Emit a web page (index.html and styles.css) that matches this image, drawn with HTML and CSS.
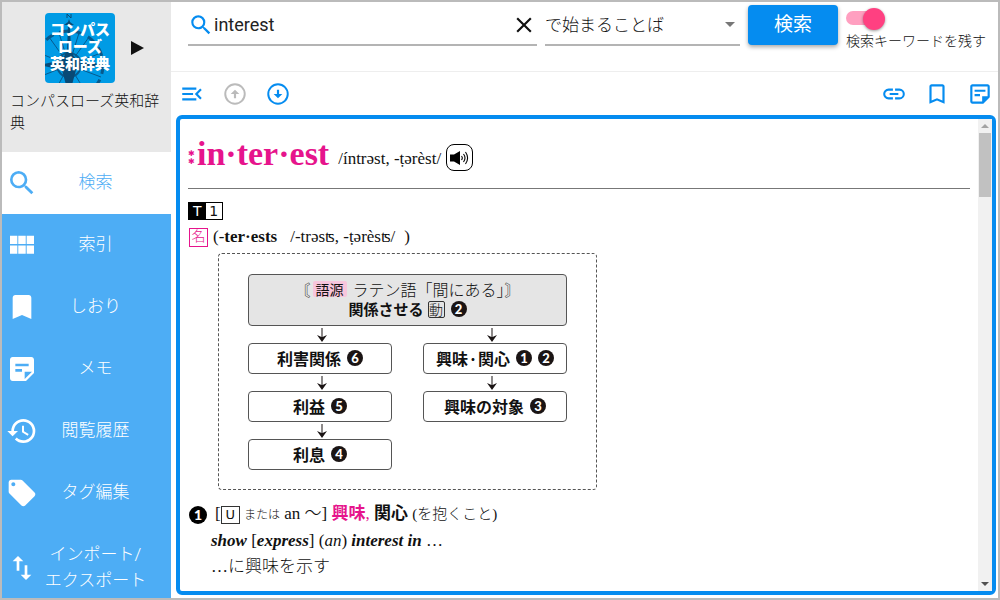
FILE: index.html
```html
<!DOCTYPE html>
<html lang="ja">
<head>
    <meta charset="UTF-8">
    <meta name="viewport" content="width=device-width, initial-scale=1.0">
    <title>コンパスローズ英和辞典</title>
    <link rel="stylesheet" href="styles.css">
</head>
<body>
    <aside class="sidebar">
        <!-- Current dictionary -->
        <div class="dictionary">
            <div class="dictionary-top">
                <div class="logo">
                    <svg class="compass" viewBox="0 0 70 70" aria-hidden="true">
                        <g fill="none" stroke="#07598c">
                            <circle cx="24" cy="52" r="34" stroke-width="3" stroke-dasharray="9 6"/>
                            <circle cx="24" cy="52" r="12" stroke-width="2"/>
                            <path d="M24 52L4 24M24 52L44 24M24 52L56 40M24 52L56 64M24 52L40 78M24 52L10 78M24 52L-6 64M24 52L-6 40M24 52L34 20M24 52L14 20"/>
                        </g>
                        <path fill="#084a76" d="M24 6l1 3 4 3h-4l1 26 5 9 30 5-30 5-7 26-7-26-22-5 22-5 5-9 1-26h-4l4-3z"/>
                        <path fill="none" stroke="#084a76" d="M22 5V1l4 4V1"/>
                    </svg>
                    <span>コンパス</span>
                    <span>ローズ</span>
                    <span>英和辞典</span>
                </div>
                <button class="next" aria-label="次の辞書">
                    <svg width="13" height="14" viewBox="0 0 13 14"><path fill="#111" d="M0 0l13 7-13 7z"/></svg>
                </button>
            </div>
            <p>コンパスローズ英和辞典</p>
        </div>

        <!-- Menu -->
        <nav>
            <a href="#" class="active">
                <svg viewBox="0 0 24 24"><path d="M15.5 14h-.79l-.28-.27A6.47 6.47 0 0 0 16 9.5 6.5 6.5 0 1 0 9.5 16c1.61 0 3.09-.59 4.23-1.57l.27.28v.79l5 4.99L20.49 19l-4.99-5zm-6 0C7.01 14 5 11.99 5 9.5S7.01 5 9.5 5 14 7.01 14 9.5 11.99 14 9.5 14z"/></svg>
                <span>検索</span>
            </a>
            <a href="#">
                <svg viewBox="0 0 24 24"><path d="M3 5h5.500v6.300H3zM9.200 5h5.600v6.300H9.200zM15.500 5H21v6.300h-5.500zM3 12.300h5.500v6.300H3zM9.200 12.300h5.600v6.300H9.200zM15.500 12.300H21v6.300h-5.500z"/></svg>
                <span>索引</span>
            </a>
            <a href="#">
                <svg viewBox="0 0 24 24"><path d="M17 3H7c-1.100 0-1.990.9-1.990 2L5 21l7-3 7 3V5c0-1.100-.9-2-2-2z"/></svg>
                <span>しおり</span>
            </a>
            <a href="#">
                <svg viewBox="0 0 24 24"><path fill-rule="evenodd" d="M19 3H5c-1.100 0-2 .9-2 2v14c0 1.100.9 2 2 2h10l6-6V5c0-1.100-.9-2-2-2zM7 8h10v2H7V8zm5 6H7v-2h5v2zm2 5.500V14h5.500L14 19.500z"/></svg>
                <span>メモ</span>
            </a>
            <a href="#">
                <svg viewBox="0 0 24 24"><path d="M13 3a9 9 0 0 0-9 9H1l3.890 3.890.07.14L9 12H6c0-3.870 3.130-7 7-7s7 3.130 7 7-3.130 7-7 7c-1.930 0-3.680-.79-4.940-2.060l-1.420 1.420A8.950 8.950 0 0 0 13 21a9 9 0 0 0 0-18zm-1 5v5l4.280 2.540.72-1.210-3.500-2.080V8H12z"/></svg>
                <span>閲覧履歴</span>
            </a>
            <a href="#">
                <svg viewBox="0 0 24 24"><path d="M21.410 11.580l-9-9C12.050 2.220 11.550 2 11 2H4c-1.100 0-2 .9-2 2v7c0 .55.220 1.050.59 1.420l9 9c.36.360.86.580 1.410.580.55 0 1.050-.220 1.410-.590l7-7c.370-.360.590-.860.590-1.410 0-.55-.230-1.060-.590-1.420zM5.500 7C4.670 7 4 6.330 4 5.500S4.670 4 5.500 4 7 4.670 7 5.500 6.330 7 5.500 7z"/></svg>
                <span>タグ編集</span>
            </a>
            <a href="#">
                <svg viewBox="0 0 24 24"><path d="M16 17.010V10h-2v7.010h-3L15 21l4-3.990h-3zM9 3L5 6.990h3V14h2V6.990h3L9 3z"/></svg>
                <span>インポート/<br>エクスポート</span>
            </a>
        </nav>
    </aside>

    <main>
        <!-- Search form -->
        <form class="search" onsubmit="return false;">
            <div class="field keyword">
                <svg class="blue" width="26" height="26" viewBox="0 0 24 24"><path d="M15.500 14h-.79l-.28-.27A6.470 6.470 0 0 0 16 9.500 6.500 6.500 0 1 0 9.500 16c1.610 0 3.090-.59 4.230-1.570l.27.280v.79l5 4.990L20.490 19l-4.990-5zm-6 0C7.010 14 5 11.990 5 9.500S7.010 5 9.500 5 14 7.010 14 9.500 11.990 14 9.500 14z"/></svg>
                <input type="text" value="interest" aria-label="検索キーワード">
                <button type="reset" aria-label="クリア">
                    <svg width="26" height="26" viewBox="0 0 24 24"><path fill="#111" d="M19 6.410L17.590 5 12 10.590 6.410 5 5 6.410 10.590 12 5 17.590 6.410 19 12 13.410 17.590 19 19 17.590 13.410 12z"/></svg>
                </button>
            </div>
            <div class="field mode">
                <select aria-label="検索方法">
                    <option>で始まることば</option>
                    <option>で終わることば</option>
                    <option>と一致することば</option>
                </select>
            </div>
            <button class="submit">検索</button>
            <label class="keep">
                <input type="checkbox" checked>
                検索キーワードを残す
            </label>
        </form>

        <!-- Toolbar -->
        <div class="toolbar">
            <button aria-label="メニューを閉じる">
                <svg viewBox="0 0 24 24"><path d="M3 18h13v-2H3v2zm0-5h10v-2H3v2zm0-7v2h13V6H3zm18 9.590L17.420 12 21 8.410 19.590 7l-5 5 5 5L21 15.590z"/></svg>
            </button>
            <button aria-label="前へ" disabled>
                <svg viewBox="0 0 24 24"><circle cx="12" cy="12" r="9" fill="none" stroke="currentColor" stroke-width="1.800"/><path d="M11 16v-4H8l4-4 4 4h-3v4z"/></svg>
            </button>
            <button aria-label="次へ">
                <svg viewBox="0 0 24 24"><circle cx="12" cy="12" r="9" fill="none" stroke="currentColor" stroke-width="1.800"/><path d="M11 8v4H8l4 4 4-4h-3V8z"/></svg>
            </button>
            <div class="spacer"></div>
            <button aria-label="リンク">
                <svg viewBox="0 0 24 24"><path d="M3.900 12c0-1.710 1.390-3.100 3.100-3.100h4V7H7a5 5 0 0 0 0 10h4v-1.900H7c-1.710 0-3.100-1.390-3.100-3.100zM8 13h8v-2H8v2zm9-6h-4v1.900h4a3.100 3.100 0 0 1 0 6.200h-4V17h4a5 5 0 0 0 0-10z"/></svg>
            </button>
            <button aria-label="しおりに追加">
                <svg viewBox="0 0 24 24"><path d="M17 3H7c-1.100 0-1.990.9-1.990 2L5 21l7-3 7 3V5c0-1.100-.9-2-2-2zm0 15l-5-2.180L7 18V5h10v13z"/></svg>
            </button>
            <button aria-label="メモを追加">
                <svg viewBox="0 0 24 24"><path fill-rule="evenodd" d="M19 3H5c-1.100 0-2 .9-2 2v14c0 1.100.9 2 2 2h10l6-6V5c0-1.100-.9-2-2-2zM5 5h14v9h-5v5H5V5zm2 3h10v2H7V8zm0 4h5v2H7v-2z"/></svg>
            </button>
        </div>

        <!-- Entry -->
        <div class="frame">
            <article>
                <header>
                    <span class="rank"><i>✱</i><i>✱</i></span>
                    <h1>in·ter·est</h1>
                    <span class="ipa">/íntrəst, -ṭərèst/</span>
                    <button class="sound" aria-label="発音">
                        <svg width="19" height="16" viewBox="0 0 19 16">
                            <path d="M0 4.500h4L10 1v14l-6-3.500H0z"/>
                            <path fill="none" stroke="#000" stroke-width="1.100" d="M11.500 6q1.600 2 0 4M13.500 4q3 4 0 8M15.500 2q4.200 6 0 12"/>
                        </svg>
                    </button>
                </header>

                <div class="level"><b>T</b><span>1</span></div>
                <div class="forms">
                    <span class="pos">名</span>
                    <span>(-<b>ter·ests</b></span>
                    <span class="forms-ipa">/-trəsʦ, -ṭərèsʦ/</span>
                    <span>)</span>
                </div>

                <!-- Sense diagram -->
                <div class="diagram">
                    <div class="box origin">
                        <div class="origin-line etymology">〘<span class="tag">語源</span> <span>ラテン語「間にある」〙</span></div>
                        <div class="origin-line strong">関係させる <span class="verb">動</span><span class="num">2</span></div>
                    </div>
                    <div class="columns">
                        <div class="column left">
                            <svg class="arrow" viewBox="0 0 10 17"><path d="M4.500 2h1v9L10 9 5 16 0 9l4.500 2z"/></svg>
                            <div class="box">利害関係 <span class="num">6</span></div>
                            <svg class="arrow" viewBox="0 0 10 17"><path d="M4.500 2h1v9L10 9 5 16 0 9l4.500 2z"/></svg>
                            <div class="box">利益 <span class="num">5</span></div>
                            <svg class="arrow" viewBox="0 0 10 17"><path d="M4.500 2h1v9L10 9 5 16 0 9l4.500 2z"/></svg>
                            <div class="box">利息 <span class="num">4</span></div>
                        </div>
                        <div class="column right">
                            <svg class="arrow" viewBox="0 0 10 17"><path d="M4.500 2h1v9L10 9 5 16 0 9l4.500 2z"/></svg>
                            <div class="box"><span class="joined">興味<span>·</span>関心</span> <span class="num">1</span><span class="num">2</span></div>
                            <svg class="arrow" viewBox="0 0 10 17"><path d="M4.500 2h1v9L10 9 5 16 0 9l4.500 2z"/></svg>
                            <div class="box">興味の対象 <span class="num">3</span></div>
                        </div>
                    </div>
                </div>

                <!-- Sense 1 -->
                <section class="sense">
                    <span class="num big">1</span>
                    <div class="sense-text">
                        <p class="meaning">[<span class="countable">U</span> <small>または</small> an ～] <span class="pink"><b>興味</b>,</span> <b>関心</b> <span class="note">(を抱くこと)</span></p>
                        <p class="phrase"><b><i>show</i></b> [<b><i>express</i></b>] (<i>an</i>) <b><i>interest in</i></b> …</p>
                        <p class="phrase">…に興味を示す</p>
                    </div>
                </section>
            </article>
            <div class="scrollbar" aria-hidden="true">
                <svg viewBox="0 0 14 14"><path fill="#a3a3a3" d="M7 5l4 4H3z"/></svg>
                <div class="thumb"></div>
                <svg viewBox="0 0 14 14"><path fill="#505050" d="M3 5h8L7 9z"/></svg>
            </div>
        </div>
    </main>
</body>
</html>
```
FILE: styles.css
```css
* {
    box-sizing: border-box;
}
body {
    font-family: Roboto, "Noto Sans CJK JP", sans-serif;
    font-weight: 300;
    margin: 0;
    height: 100vh;
    display: flex;
    border: 2px solid #bbb;
    background: #fff;
    color: #111;
    overflow: hidden;
}
h1, p {
    margin: 0;
}
b {
    font-weight: bold;
}
button {
    font-family: inherit;
    padding: 0;
    border: none;
    background: none;
    cursor: pointer;
}
button svg {
    display: block;
}

/* Sidebar */
.sidebar {
    width: 169px;
    flex-shrink: 0;
    display: flex;
    flex-direction: column;
    background: #4dadf5;
    overflow: hidden;
}
.dictionary {
    height: 150px;
    flex-shrink: 0;
    padding: 11px 8px 0;
    background: #e8e8e8;
}
.dictionary-top {
    display: flex;
    align-items: center;
    gap: 16px;
    padding-left: 35px;
}
.dictionary p {
    margin-top: 7px;
    font-size: 15px;
    line-height: 22px;
}
.logo {
    position: relative;
    width: 70px;
    height: 70px;
    padding-top: 9px;
    border-radius: 4px;
    background: #009be5;
    color: #fff;
    font-size: 15px;
    font-weight: 900;
    line-height: 17px;
    text-align: center;
    overflow: hidden;
}
.logo span {
    position: relative;
    display: block;
}
.compass {
    position: absolute;
    top: 0;
    left: 0;
}
nav a {
    display: flex;
    align-items: center;
    min-height: 62px;
    padding: 4px 24px 6px 4px;
    color: #fff;
    font-size: 17px;
    line-height: 26px;
    text-align: center;
    text-decoration: none;
}
nav a.active {
    background: #fff;
    color: #4dadf5;
}
nav svg {
    width: 32px;
    height: 32px;
    margin: 2px 6px 0 0;
    flex-shrink: 0;
    fill: currentColor;
}
nav span {
    flex: 1;
    white-space: nowrap;
}
nav a:last-child {
    min-height: 88px;
}

/* Search form */
main {
    flex: 1;
    min-width: 0;
    display: flex;
    flex-direction: column;
}
.search {
    display: flex;
    align-items: flex-start;
    gap: 8px;
    height: 70px;
    flex-shrink: 0;
    padding: 3px 12px 0 17px;
    border-bottom: 1px solid #eee;
}
.field {
    display: flex;
    align-items: center;
    height: 41px;
    border-bottom: 2px solid #b4b4b4;
}
.keyword {
    flex: 1;
    min-width: 0;
}
.keyword input {
    flex: 1;
    min-width: 0;
    padding: 0;
    border: none;
    outline: none;
    font-family: inherit;
    font-size: 18px;
    color: #222;
}
.blue {
    fill: #058cf0;
}
.mode {
    position: relative;
    width: 195px;
}
.mode select {
    width: 100%;
    padding: 0;
    border: none;
    outline: none;
    appearance: none;
    background: none;
    font-family: inherit;
    font-size: 17px;
    font-weight: 300;
    color: #111;
}
.mode::after {
    content: "";
    position: absolute;
    right: 5px;
    top: 17px;
    border: 5px solid transparent;
    border-top-color: #777;
    border-bottom: none;
    pointer-events: none;
}
.submit {
    width: 90px;
    height: 40px;
    padding-bottom: 5px;
    border-radius: 4px;
    background: #058cf0;
    color: #fff;
    font-size: 19px;
    box-shadow: 0 2px 4px rgba(0, 0, 0, 0.35);
}
.keep {
    display: flex;
    flex-direction: column;
    gap: 6px;
    padding-top: 6px;
    font-size: 14px;
    line-height: 20px;
    white-space: nowrap;
}
.keep input {
    position: relative;
    width: 36px;
    height: 14px;
    margin: 0;
    border-radius: 7px;
    appearance: none;
    background: #ff9fc0;
}
.keep input::before {
    content: "";
    position: absolute;
    top: -3px;
    left: 0;
    width: 22px;
    height: 22px;
    border-radius: 50%;
    background: #fafafa;
    box-shadow: 0 1px 3px rgba(0, 0, 0, 0.4);
}
.keep input:checked::before {
    left: 17px;
    background: #ff4081;
}

/* Toolbar */
.toolbar {
    display: flex;
    align-items: center;
    gap: 17px;
    height: 43px;
    flex-shrink: 0;
    padding: 0 5px 0 8px;
}
.toolbar button {
    color: #058cf0;
}
.toolbar button:disabled {
    color: #bbb;
}
.toolbar svg {
    width: 26px;
    height: 26px;
    fill: currentColor;
}
.spacer {
    flex: 1;
}

/* Entry */
.frame {
    flex: 1;
    min-height: 0;
    display: flex;
    margin: 0 2px 3px 5px;
    border: 4px solid #058cf0;
    border-radius: 6px;
}
article {
    flex: 1;
    padding: 0 8px;
    font-family: "Liberation Serif", "Noto Sans CJK JP", serif;
    font-size: 17px;
    overflow: hidden;
}
article header {
    display: flex;
    align-items: center;
    height: 70px;
    border-bottom: 1px solid #777;
}
.rank {
    display: flex;
    flex-direction: column;
    width: 9px;
    padding-top: 8px;
    color: #e6148c;
    font-family: "DejaVu Sans", sans-serif;
    font-size: 8px;
    line-height: 8px;
}
.rank i {
    font-style: normal;
}
article h1 {
    color: #e6148c;
    font-size: 34px;
    line-height: 40px;
}
.ipa {
    margin: 10px 5px 0 9px;
}
.sound {
    display: flex;
    align-items: center;
    justify-content: center;
    width: 27px;
    height: 27px;
    margin-top: 8px;
    border: 1px solid #000;
    border-radius: 8px;
}
.level {
    display: flex;
    width: 35px;
    height: 18px;
    margin-top: 13px;
    border: 1px solid #000;
    font-family: "DejaVu Sans", sans-serif;
    font-size: 14px;
    font-weight: normal;
    line-height: 16px;
    text-align: center;
}
.level b {
    flex: 1;
    background: #000;
    color: #fff;
    font-weight: normal;
}
.level span {
    flex: 1;
}
.forms {
    display: flex;
    align-items: center;
    height: 22px;
    margin: 6px 0 5px;
}
.pos {
    width: 19px;
    height: 19px;
    margin: 0 5px 0 1px;
    border: 1px solid #e6148c;
    color: #e6148c;
    font-size: 14px;
    line-height: 16px;
    text-align: center;
}
.forms-ipa {
    margin: 0 9px 0 13px;
}

/* Sense diagram */
.diagram {
    width: 379px;
    margin-left: 30px;
    padding: 20px 29px 19px;
    border: 1px dashed #555;
    border-radius: 4px;
    font-family: "Noto Sans CJK JP", sans-serif;
    font-size: 16px;
}
.box {
    display: flex;
    align-items: center;
    justify-content: center;
    gap: 4px;
    width: 100%;
    height: 31px;
    padding-bottom: 2px;
    border: 1px solid #555;
    border-radius: 4px;
    font-weight: bold;
}
.origin {
    flex-direction: column;
    gap: 0;
    height: 52px;
    background: #e5e5e5;
}
.origin-line {
    display: flex;
    align-items: center;
    gap: 4px;
    line-height: 20px;
    font-weight: 300;
}
.origin .etymology {
    gap: 2px;
}
.origin .strong {
    font-weight: bold;
    font-size: 15px;
}
.tag {
    margin-right: 4px;
    padding: 0 3px;
    border-radius: 2px;
    background: #f7c6dc;
    font-size: 14px;
    font-weight: normal;
    line-height: 16px;
}
.verb {
    width: 17px;
    height: 17px;
    border: 1px solid #333;
    border-radius: 2px;
    font-size: 14px;
    font-weight: 300;
    line-height: 15px;
    text-align: center;
}
.num {
    width: 16px;
    height: 16px;
    margin-left: 2px;
    border-radius: 50%;
    background: #1a1414;
    color: #fff;
    font-family: Lato, sans-serif;
    font-size: 13px;
    font-weight: 900;
    line-height: 16px;
    text-align: center;
}
.columns {
    display: grid;
    grid-template-columns: 1fr 1fr;
    gap: 31px;
}
.column {
    display: flex;
    flex-direction: column;
    align-items: center;
}
.arrow {
    box-sizing: content-box;
    width: 10px;
    height: 17px;
    fill: #1a1414;
}
.left .arrow {
    padding-left: 4px;
}
.right .arrow {
    padding-right: 6px;
}
.joined {
    display: flex;
}
.joined span {
    width: 10px;
    text-align: center;
}

/* Senses */
.sense {
    display: flex;
    gap: 4px;
    margin-top: 11px;
    line-height: 26px;
}
.sense .big {
    width: 18px;
    height: 18px;
    margin: 5px 0 0 1px;
    background: #000;
    font-size: 14px;
    line-height: 18px;
}
.meaning {
    margin-left: 4px;
}
.countable {
    display: inline-block;
    width: 19px;
    height: 18px;
    border: 1px solid #333;
    font-family: "DejaVu Sans", sans-serif;
    font-size: 13px;
    font-weight: normal;
    line-height: 16px;
    text-align: center;
}
.meaning small {
    font-size: 12px;
}
.note {
    font-size: 15px;
}
.pink {
    color: #e6148c;
}

/* Scrollbar */
.scrollbar {
    display: flex;
    flex-direction: column;
    width: 14px;
    background: #f1f1f1;
}
.scrollbar svg {
    width: 14px;
    height: 14px;
}
.scrollbar svg:last-child {
    margin-top: auto;
}
.thumb {
    width: 12px;
    height: 64px;
    margin: 0 auto;
    background: #c1c1c1;
}
```
